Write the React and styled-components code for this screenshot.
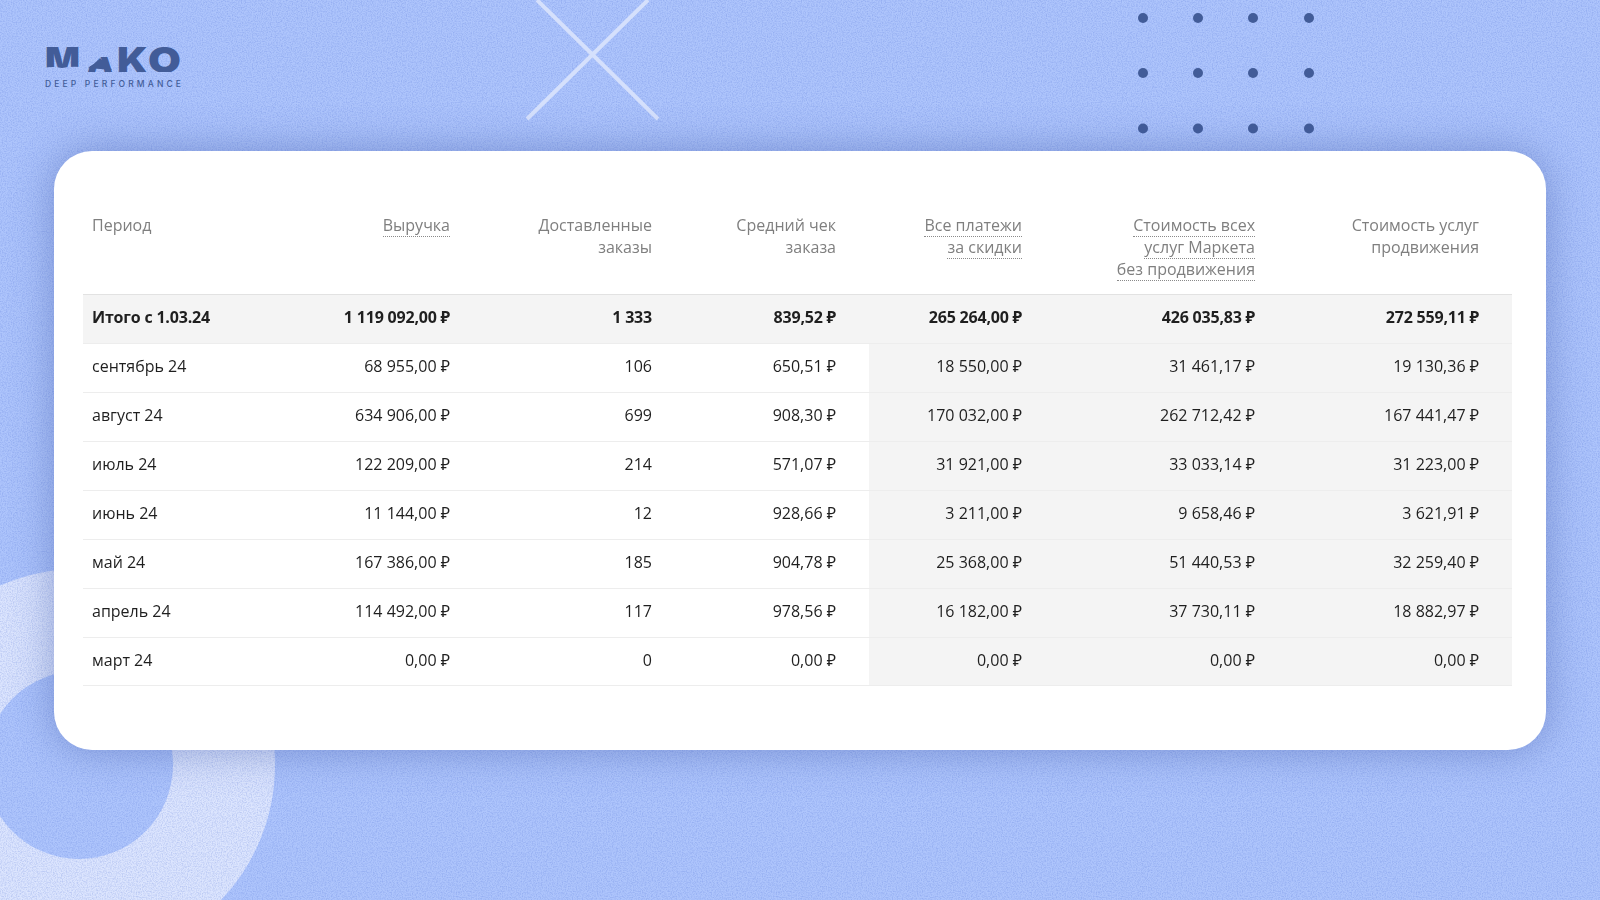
import React from "react";
import styled, { createGlobalStyle } from "styled-components";

const GlobalStyle = createGlobalStyle`
  html, body {
    margin: 0;
    padding: 0;
    background: #a9c0f8;
  }
`;

const Page = styled.div`
  position: relative;
  width: 1600px;
  height: 900px;
  overflow: hidden;
  padding: 151px 54px 0;
  box-sizing: border-box;
  background: #aec5fc;
  font-family: "Open Sans", "Noto Sans", sans-serif;
`;

const Decor = styled.svg`
  position: absolute;
  left: 0;
  top: 0;
`;

const Card = styled.div`
  position: relative;
  height: 599px;
  box-sizing: border-box;
  padding: 63px 33px 0 29px;
  background: #fff;
  border-radius: 38px;
  box-shadow: 0 0 42px rgba(60, 85, 160, 0.45);
`;

const Table = styled.div`
  display: grid;
  grid-template-columns: 151px 216px 202px 184px 186px 233px 224px 33px;
  filter: blur(0.3px);
`;

const HeadRow = styled.div`
  display: contents;
`;

const HeadCell = styled.div`
  height: 80px;
  box-sizing: border-box;
  padding-left: ${({ $first }) => ($first ? "9px" : "0")};
  text-align: ${({ $first }) => ($first ? "left" : "right")};
  color: #7f7f7f;
  font-size: 16px;
  line-height: 22px;
  white-space: nowrap;
`;

const Dotted = styled.span`
  border-bottom: 1px dotted #8a8a8a;
`;

const Row = styled.div`
  display: contents;
`;

const Cell = styled.div`
  height: 49px;
  box-sizing: border-box;
  display: flex;
  align-items: center;
  justify-content: ${({ $first }) => ($first ? "flex-start" : "flex-end")};
  padding-left: ${({ $first }) => ($first ? "9px" : "0")};
  padding-bottom: 4px;
  font-size: 16px;
  font-weight: ${({ $bold }) => ($bold ? 700 : 400)};
  letter-spacing: ${({ $bold }) => ($bold ? "-0.2px" : "0")};
  color: #1f1f1f;
  white-space: nowrap;
  border-top: 1px solid ${({ $top }) => ($top ? "#e2e2e2" : "#ededed")};
  border-bottom: ${({ $last }) => ($last ? "1px solid #ededed" : "none")};
  background: ${({ $shade }) =>
    $shade === "full"
      ? "#f4f4f4"
      : $shade === "part"
      ? "linear-gradient(to right, transparent 33px, #f4f4f4 33px)"
      : "transparent"};
`;

const head = [
  ["Период"],
  ["Выручка"],
  ["Доставленные", "заказы"],
  ["Средний чек", "заказа"],
  ["Все платежи", "за скидки"],
  ["Стоимость всех", "услуг Маркета", "без продвижения"],
  ["Стоимость услуг", "продвижения"],
];
const dotted = [false, true, false, false, true, true, false];

const rows = [
  ["Итого с 1.03.24", "1 119 092,00 ₽", "1 333", "839,52 ₽", "265 264,00 ₽", "426 035,83 ₽", "272 559,11 ₽"],
  ["сентябрь 24", "68 955,00 ₽", "106", "650,51 ₽", "18 550,00 ₽", "31 461,17 ₽", "19 130,36 ₽"],
  ["август 24", "634 906,00 ₽", "699", "908,30 ₽", "170 032,00 ₽", "262 712,42 ₽", "167 441,47 ₽"],
  ["июль 24", "122 209,00 ₽", "214", "571,07 ₽", "31 921,00 ₽", "33 033,14 ₽", "31 223,00 ₽"],
  ["июнь 24", "11 144,00 ₽", "12", "928,66 ₽", "3 211,00 ₽", "9 658,46 ₽", "3 621,91 ₽"],
  ["май 24", "167 386,00 ₽", "185", "904,78 ₽", "25 368,00 ₽", "51 440,53 ₽", "32 259,40 ₽"],
  ["апрель 24", "114 492,00 ₽", "117", "978,56 ₽", "16 182,00 ₽", "37 730,11 ₽", "18 882,97 ₽"],
  ["март 24", "0,00 ₽", "0", "0,00 ₽", "0,00 ₽", "0,00 ₽", "0,00 ₽"],
];

const dots = [];
[18, 73, 128.5].forEach((y) => {
  [1143, 1198, 1253, 1309].forEach((x) => dots.push([x, y]));
});

const cellShade = (r, c) => {
  if (r === 0) return "full";
  if (c === 4) return "part";
  return c > 4 ? "full" : "none";
};

const App = () => (
  <Page>
    <GlobalStyle />
    <Decor width="1600" height="900" viewBox="0 0 1600 900">
      <defs>
        <filter id="grain" x="0" y="0" width="100%" height="100%" colorInterpolationFilters="sRGB">
          <feTurbulence type="fractalNoise" baseFrequency="0.8" numOctaves="2" seed="4" />
          <feColorMatrix values="0 0 0 0 0.25 0 0 0 0 0.38 0 0 0 0 0.8 0 0 0 2.4 -0.9" />
        </filter>
        <clipPath id="mako-cut">
          <path d="M44 44H81V67Q72 66 62 68Q52 66 44 68Z" />
          <path d="M86 68Q95 65 100 57L116 57V44H186V72H118V72H86Z" />
        </clipPath>
      </defs>
      <path
        fillRule="evenodd"
        d="M-117 765a196 196 0 1 0 392 0a196 196 0 1 0 -392 0zM-15 765a94 94 0 1 0 188 0a94 94 0 1 0 -188 0z"
        fill="#dce5fe"
      />
      <rect width="1600" height="900" filter="url(#grain)" opacity="0.2" />
      <path d="M537 0L658 119M648 0L527 119" stroke="#d5e0fc" strokeWidth="4" fill="none" />
      {dots.map(([x, y]) => (
        <circle key={`${x}-${y}`} cx={x} cy={y} r="5" fill="#425c98" />
      ))}
      <path d="M88 68Q95 65 100 58L112 70Z" fill="#425c98" />
      <text
        y="73"
        fill="#425c98"
        clipPath="url(#mako-cut)"
        style={{ font: "900 36px Inter, sans-serif" }}
      >
        <tspan x="45" textLength="35" lengthAdjust="spacingAndGlyphs">M</tspan>
        <tspan x="87" textLength="26" lengthAdjust="spacingAndGlyphs">A</tspan>
        <tspan x="117" textLength="31" lengthAdjust="spacingAndGlyphs">K</tspan>
        <tspan x="148" textLength="33" lengthAdjust="spacingAndGlyphs">O</tspan>
      </text>
      <text
        x="45"
        y="87"
        fill="#425c98"
        textLength="136"
        style={{ font: "500 8.5px Inter, sans-serif" }}
      >
        DEEP PERFORMANCE
      </text>
    </Decor>
    <Card>
      <Table>
        <HeadRow>
          {head.map((lines, i) => (
            <HeadCell key={i} $first={i === 0}>
              {lines.map((line) => (
                <div key={line}>{dotted[i] ? <Dotted>{line}</Dotted> : line}</div>
              ))}
            </HeadCell>
          ))}
          <HeadCell />
        </HeadRow>
        {rows.map((row, r) => (
          <Row key={row[0]}>
            {row.map((value, c) => (
              <Cell
                key={c}
                $first={c === 0}
                $bold={r === 0}
                $top={r === 0}
                $last={r === rows.length - 1}
                $shade={cellShade(r, c)}
              >
                {value}
              </Cell>
            ))}
            <Cell $top={r === 0} $shade="full" $last={r === rows.length - 1} />
          </Row>
        ))}
      </Table>
    </Card>
  </Page>
);

export default App;
